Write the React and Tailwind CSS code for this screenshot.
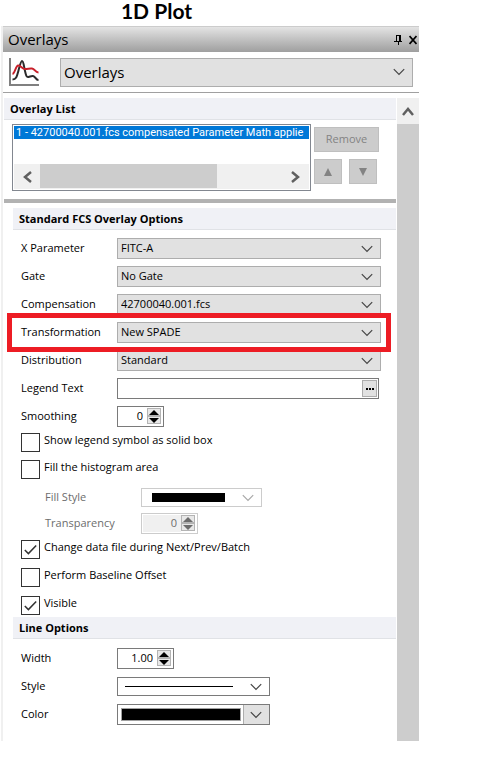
import React, { useState } from 'react';

const noop = () => {};

function Chevron({ className = 'text-[#444444]' }) {
  return (
    <svg className={`pointer-events-none absolute top-1/2 right-2 h-2 w-3 -translate-y-1/2 ${className}`} viewBox="0 0 12 8" fill="none" stroke="currentColor" strokeWidth="1.2">
      <path d="M0.8 1.2 L6 6.4 L11.2 1.2" />
    </svg>
  );
}

function SectionHeader({ children }) {
  return (
    <h2 className="h-[22px] border-b border-[#e0e2e6] bg-[#f0f1f6] pl-1.5 text-[11px] leading-[21px] font-bold">
      {children}
    </h2>
  );
}

function Field({ id, label, children }) {
  return (
    <div className="flex h-[21px] items-center">
      <label htmlFor={id} className="w-24 shrink-0">{label}</label>
      {children}
    </div>
  );
}

function Dropdown({ id, value }) {
  return (
    <div className="relative mr-[15px] h-full flex-1">
      <select id={id} defaultValue={value} className="block h-full w-full appearance-none border border-[#adadad] bg-[#e1e1e1] pl-[3px]">
        <option>{value}</option>
      </select>
      <Chevron />
    </div>
  );
}

function Spinner({ id, value, width, disabled }) {
  const [current, setCurrent] = useState(value);
  const step = (amount) => {
    const decimals = value.includes('.') ? 2 : 0;
    setCurrent(Math.max(0, parseFloat(current) + amount).toFixed(decimals));
  };
  const button = 'flex h-2 w-[14px] items-center justify-center border border-[#b4b4b4] bg-[#e8e8e8]';

  return (
    <div className={`flex h-[21px] border p-px ${width} ${disabled ? 'border-[#cccccc] text-[#6d6d6d]' : 'border-[#7a7a7a] text-black'}`}>
      <input
        id={id}
        type="text"
        value={current}
        disabled={disabled}
        onChange={(e) => setCurrent(e.target.value)}
        className={`min-w-0 flex-1 pr-1 text-right ${disabled ? 'bg-[#f0f0f0]' : 'bg-white'}`}
      />
      <div className="flex w-[15px] flex-col">
        <button type="button" aria-label="Increase" disabled={disabled} onClick={() => step(1)} className={button}>
          <svg className="h-[5px] w-[10px] shrink-0" viewBox="0 0 10 5" fill="currentColor"><path d="M5 0 L10 5 H0 Z" /></svg>
        </button>
        <button type="button" aria-label="Decrease" disabled={disabled} onClick={() => step(-1)} className={button}>
          <svg className="h-[5px] w-[10px] shrink-0" viewBox="0 0 10 5" fill="currentColor"><path d="M5 5 L10 0 H0 Z" /></svg>
        </button>
      </div>
    </div>
  );
}

function CheckOption({ label, defaultChecked = false }) {
  const [checked, setChecked] = useState(defaultChecked);
  return (
    <label className="flex h-[19px] items-start gap-1">
      <span className="relative h-[19px] w-[19px] shrink-0">
        <input
          type="checkbox"
          checked={checked}
          onChange={(e) => setChecked(e.target.checked)}
          className="block h-[19px] w-[19px] appearance-none border border-[#333333] bg-white"
        />
        {checked && (
          <svg className="pointer-events-none absolute inset-0" viewBox="0 0 19 19" fill="none" stroke="#333333" strokeWidth="1.5">
            <path d="M3.8 10 L7.4 13.6 L15.2 5.6" />
          </svg>
        )}
      </span>
      <span className="leading-[14px]">{label}</span>
    </label>
  );
}

function PlotIcon() {
  return (
    <svg className="h-7 w-[30px] shrink-0" viewBox="0 0 30 28" fill="none">
      <path d="M1 0 V27 H30" stroke="#808080" strokeWidth="2" />
      <path d="M3.500 21.500 C7.500 21.500 8 18 9.500 12.500 C11 7 11.800 3 13 3 C14.500 3 14.800 8 16 13 C17 17.500 17.500 19.500 19.500 19 C21.500 18.500 22 17.800 24 18 C26.500 18.200 26.500 22 29.500 22" stroke="#2b2b2b" strokeWidth="2" />
      <path d="M3.500 16 C6 15.500 6.500 8 9 7.500 C12 7.200 13 11 16 11 C19 11 20.500 10.200 23 10.500 C26 10.800 26 14.500 29.500 14.500" stroke="#c8202a" strokeWidth="2" />
    </svg>
  );
}

function OverlayList() {
  return (
    <div className="flex px-2 pt-1">
      <div className="flex h-[67px] min-w-0 flex-1 flex-col justify-between border border-[#828790] p-px">
        <ul>
          <li className="h-[13px] bg-[#0078d7] pl-[2px] font-['Roboto',sans-serif] leading-[14px] whitespace-nowrap text-white">
            1 - 42700040.001.fcs compensated Parameter Math applie
          </li>
        </ul>
        <div className="flex h-[25px] justify-between bg-[#f0f0f0]">
          <button type="button" aria-label="Scroll left" className="flex w-[26px] items-center justify-center">
            <svg className="h-3 w-[9px]" viewBox="0 0 9 12" fill="none" stroke="#606060" strokeWidth="2.500"><path d="M8 1 L2 6 L8 11" /></svg>
          </button>
          <div className="mb-px w-[60%] bg-[#cdcdcd]"></div>
          <div className="flex-1"></div>
          <button type="button" aria-label="Scroll right" className="flex w-7 items-center justify-center">
            <svg className="h-3 w-[9px]" viewBox="0 0 9 12" fill="none" stroke="#606060" strokeWidth="2.500"><path d="M1 1 L7 6 L1 11" /></svg>
          </button>
        </div>
      </div>
      <div className="flex w-[77px] flex-col gap-[7px] pt-[3px] pr-2 pl-[3px] text-[#838383]">
        <button type="button" disabled className="h-[25px] w-[65px] border border-[#bfbfbf] bg-[#cccccc]">Remove</button>
        <div className="flex gap-[7px]">
          <button type="button" disabled aria-label="Move up" className="flex h-[25px] w-7 items-center justify-center border border-[#bfbfbf] bg-[#cccccc]">
            <svg className="h-2 w-2" viewBox="0 0 8 8" fill="currentColor"><path d="M4 0 L8 8 H0 Z" /></svg>
          </button>
          <button type="button" disabled aria-label="Move down" className="flex h-[25px] w-7 items-center justify-center border border-[#bfbfbf] bg-[#cccccc]">
            <svg className="h-2 w-2" viewBox="0 0 8 8" fill="currentColor"><path d="M4 8 L8 0 H0 Z" /></svg>
          </button>
        </div>
      </div>
    </div>
  );
}

function App() {
  return (
    <div className="min-h-screen bg-white font-['Open_Sans',sans-serif] text-[11px] text-black">
      <div className="w-full max-w-[419px] pl-px">
        <h1 className="h-[26px] pr-[107px] text-center font-['Lato',sans-serif] text-[21px] leading-[22px] font-bold">1D Plot</h1>

        <main className="border-l-2 border-[#f0f0f0]">
          <header className="flex h-[26px] items-center justify-between border-t border-[#cccccc] bg-linear-to-b from-[#e4e4e4] to-[#9f9f9f] pr-0.5 pl-[5px]">
            <span className="text-[15px]">Overlays</span>
            <div className="flex items-center gap-[7px]">
              <button type="button" aria-label="Pin">
                <svg className="block h-[10px] w-2" viewBox="0 0 8 10" fill="#000000" shapeRendering="crispEdges">
                  <path d="M2 0h5v6h1v1h-3v3h-1v-3h-4v-1h2z M3 1v5h2v-5z" fillRule="evenodd" />
                </svg>
              </button>
              <button type="button" aria-label="Close">
                <svg className="block h-[10px] w-2" viewBox="0 0 8 10" fill="none" stroke="#000000" strokeWidth="1.800"><path d="M0.500 1 L7.500 9 M7.500 1 L0.500 9" /></svg>
              </button>
            </div>
          </header>

          <div className="flex h-[41px] items-center gap-[21px] border-b border-[#a0a0a0] pr-1.5 pl-1.5">
            <PlotIcon />
            <div className="relative h-[29px] flex-1">
              <select aria-label="Settings page" className="block h-full w-full appearance-none border border-[#adadad] bg-[#e1e1e1] pl-[3px] text-[15px]">
                <option>Overlays</option>
              </select>
              <Chevron />
            </div>
          </div>

          <div className="flex pt-[5px]">
            <div className="min-w-0 flex-1 pr-px pl-px">
              <SectionHeader>Overlay List</SectionHeader>
              <OverlayList />
              <div className="mt-2 h-1 bg-[#b2b2b2]"></div>

              <div className="mt-[5px] pl-[9px]">
                <SectionHeader>Standard FCS Overlay Options</SectionHeader>
                <div className="flex flex-col gap-[7px] pt-2 pl-2">
                  <Field id="x-parameter" label="X Parameter"><Dropdown id="x-parameter" value="FITC-A" /></Field>
                  <Field id="gate" label="Gate"><Dropdown id="gate" value="No Gate" /></Field>
                  <Field id="compensation" label="Compensation"><Dropdown id="compensation" value="42700040.001.fcs" /></Field>
                  <div className="relative z-10">
                    <Field id="transformation" label="Transformation"><Dropdown id="transformation" value="New SPADE" /></Field>
                    {/* highlight around the transformation row */}
                    <div className="pointer-events-none absolute -inset-y-[9px] -left-3.5 right-[5px] border-[5px] border-[#ed1c24]"></div>
                  </div>
                  <Field id="distribution" label="Distribution"><Dropdown id="distribution" value="Standard" /></Field>
                  <Field id="legend-text" label="Legend Text">
                    <div className="mr-[17px] flex h-full flex-1 border border-[#7a7a7a] p-px">
                      <input id="legend-text" type="text" className="min-w-0 flex-1 px-1" />
                      <button type="button" aria-label="Edit legend text" className="flex w-[15px] items-center justify-center border border-[#adadad] bg-[#e1e1e1]">
                        <svg className="h-0.5 w-2" viewBox="0 0 8 2" fill="#000000"><path d="M0 0h2v2h-2z M3 0h2v2h-2z M6 0h2v2h-2z" /></svg>
                      </button>
                    </div>
                  </Field>
                  <Field id="smoothing" label="Smoothing"><Spinner id="smoothing" value="0" width="w-[47px]" /></Field>
                </div>

                <div className="flex flex-col gap-2 pt-1.5 pb-[9px] pl-2">
                  <CheckOption label="Show legend symbol as solid box" />
                  <CheckOption label="Fill the histogram area" />
                </div>

                <div className="flex flex-col gap-1.5 pl-8 text-[#6d6d6d]">
                  <div className="flex h-[19px] items-center">
                    <label htmlFor="fill-style" className="w-24 shrink-0">Fill Style</label>
                    <div className="relative h-full w-[121px]">
                      <select id="fill-style" disabled className="block h-full w-full appearance-none border border-[#cccccc] bg-white">
                        <option value="solid"></option>
                      </select>
                      <div className="pointer-events-none absolute inset-y-[5px] right-[37px] left-[11px] bg-black"></div>
                      <Chevron className="text-[#a8a8a8]" />
                    </div>
                  </div>
                  <Field id="transparency" label="Transparency"><Spinner id="transparency" value="0" width="w-[57px]" disabled /></Field>
                </div>

                <div className="flex flex-col gap-[9px] pt-1.5 pb-0.5 pl-2">
                  <CheckOption label="Change data file during Next/Prev/Batch" defaultChecked />
                  <CheckOption label="Perform Baseline Offset" />
                  <CheckOption label="Visible" defaultChecked />
                </div>

                <SectionHeader>Line Options</SectionHeader>
                <div className="flex flex-col gap-[7px] pt-[9px] pb-4 pl-2">
                  <Field id="line-width" label="Width"><Spinner id="line-width" value="1.00" width="w-[57px]" /></Field>
                  <Field id="line-style" label="Style">
                    <div className="relative h-[19px] w-[153px]">
                      <select id="line-style" onChange={noop} className="block h-full w-full appearance-none border border-[#7a7a7a] bg-white">
                        <option value="solid"></option>
                      </select>
                      <div className="pointer-events-none absolute top-[9px] right-[37px] left-2 h-px bg-black"></div>
                      <Chevron />
                    </div>
                  </Field>
                  <Field id="line-color" label="Color">
                    <div className="relative h-full w-[153px]">
                      <select id="line-color" onChange={noop} className="block h-full w-full appearance-none border border-[#7a7a7a] bg-white">
                        <option value="black"></option>
                      </select>
                      <div className="pointer-events-none absolute inset-y-1 right-[29px] left-1 border border-[#a0a0a0] bg-black"></div>
                      <div className="pointer-events-none absolute inset-y-px right-px w-[26px] border-l border-[#adadad] bg-[#e1e1e1]"></div>
                      <Chevron />
                    </div>
                  </Field>
                </div>
              </div>
            </div>

            <div className="flex w-[22px] shrink-0 flex-col bg-[#cdcdcd]">
              <button type="button" aria-label="Scroll up" className="flex h-[26px] items-center justify-center bg-[#f0f0f0]">
                <svg className="h-[9px] w-3" viewBox="0 0 12 9" fill="none" stroke="#606060" strokeWidth="2.500"><path d="M1 8 L6 2 L11 8" /></svg>
              </button>
            </div>
          </div>
        </main>
      </div>
    </div>
  );
}

export default App;
